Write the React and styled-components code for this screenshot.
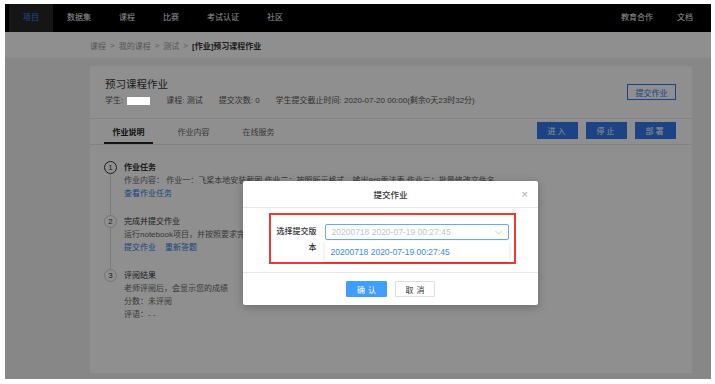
import React from "react";
import styled, { createGlobalStyle } from "styled-components";

const Global = createGlobalStyle`
  html, body { margin: 0; padding: 0; background: #fff; }
  body { font-family: "Liberation Sans", "Noto Sans CJK SC", sans-serif; }
  * { box-sizing: border-box; }
`;

const Outer = styled.div`
  width: 715px;
  height: 384px;
  padding: 4px 4px 5px 5px;
  background: #fff;
`;

const Frame = styled.div`
  position: relative;
  width: 706px;
  height: 375px;
  overflow: hidden;
  background: #f0f0f0;
  display: flex;
  flex-direction: column;
`;

const TopNav = styled.div`
  height: 28px;
  background: #000;
  display: flex;
  align-items: stretch;
  padding: 0 6px 0 4px;
  flex-shrink: 0;
`;

const NavItem = styled.div`
  padding: 0 ${(p) => (p.$right ? 12 : 14)}px;
  font-size: 8px;
  line-height: 28px;
  color: ${(p) => (p.$active ? "#3a86ee" : "#fff")};
  background: ${(p) => (p.$active ? "#272727" : "transparent")};
  white-space: nowrap;
`;

const NavSpacer = styled.div`
  flex: 1;
`;

const Crumbs = styled.div`
  height: 26px;
  background: #fff;
  display: flex;
  align-items: center;
  padding-left: 85px;
  font-size: 8px;
  color: #999;
  gap: 4px;
  flex-shrink: 0;
`;

const CrumbCurrent = styled.span`
  color: #333;
  font-weight: bold;
`;

const Main = styled.div`
  flex: 1;
  padding: 8px 19px 6px 85px;
  display: flex;
`;

const Card = styled.div`
  flex: 1;
  background: #fff;
  display: flex;
  flex-direction: column;
`;

const CardHeader = styled.div`
  height: 53px;
  padding: 0 16px 0 15px;
  display: flex;
  align-items: center;
  justify-content: space-between;
  border-bottom: 1px solid #eaeaea;
`;

const HeadText = styled.div`
  display: flex;
  flex-direction: column;
  gap: 4px;
`;

const Title = styled.div`
  font-size: 10.5px;
  line-height: 14px;
  color: #333;
`;

const Meta = styled.div`
  display: flex;
  gap: 16px;
  font-size: 8px;
  line-height: 12px;
  color: #555;
`;

const MetaItem = styled.span`
  display: flex;
  align-items: center;
  gap: 4px;
  white-space: nowrap;
`;

const Redacted = styled.span`
  position: relative;
  z-index: 30;
  display: inline-block;
  width: 23px;
  height: 8px;
  background: #fff;
`;

const OutlineButton = styled.button`
  width: 49px;
  height: 16px;
  padding: 0;
  border: 1px solid #3476ec;
  background: #fff;
  color: #3476ec;
  font-family: inherit;
  font-size: 8px;
`;

const TabsRow = styled.div`
  height: 26px;
  padding: 0 16px 0 14px;
  display: flex;
  align-items: stretch;
  justify-content: space-between;
  border-bottom: 1px solid #eaeaea;
`;

const Tabs = styled.div`
  display: flex;
  gap: 16px;
`;

const Tab = styled.div`
  width: 49px;
  display: flex;
  align-items: center;
  justify-content: center;
  font-size: 8px;
  color: ${(p) => (p.$active ? "#222" : "#666")};
  font-weight: ${(p) => (p.$active ? "bold" : "normal")};
  border-bottom: 2px solid ${(p) => (p.$active ? "#222" : "transparent")};
  padding-top: 1px;
`;

const Actions = styled.div`
  display: flex;
  align-items: center;
  gap: 8px;
  padding-bottom: 2px;
`;

const SolidButton = styled.button`
  width: 41px;
  height: 17px;
  padding: 0;
  border: none;
  background: #3478f0;
  color: #fff;
  font-family: inherit;
  font-size: 8px;
  letter-spacing: 2px;
`;

const Steps = styled.div`
  padding: 16px 0 0 14px;
  display: flex;
  flex-direction: column;
`;

const Step = styled.div`
  display: flex;
  padding-bottom: ${(p) => (p.$last ? 0 : 15)}px;
`;

const Rail = styled.div`
  width: 20px;
  display: flex;
  flex-direction: column;
  align-items: flex-start;
  margin-bottom: ${(p) => (p.$last ? 0 : -15)}px;
`;

const Circle = styled.div`
  width: 13px;
  height: 13px;
  border-radius: 50%;
  border: 1px solid ${(p) => (p.$active ? "#333" : "#cfcfcf")};
  color: #333;
  font-size: 8px;
  display: flex;
  align-items: center;
  justify-content: center;
  flex-shrink: 0;
`;

const RailLine = styled.div`
  flex: 1;
  width: 1px;
  margin-left: 6px;
  background: #dcdcdc;
`;

const StepBody = styled.div`
  display: flex;
  flex-direction: column;
  font-size: 8px;
  line-height: 13px;
  color: #666;
  white-space: nowrap;
`;

const StepTitle = styled.div`
  color: #333;
  font-weight: ${(p) => (p.$active ? "bold" : "normal")};
`;

const Links = styled.div`
  display: flex;
  gap: 9px;
`;

const Link = styled.span`
  color: #3478e0;
`;

const Overlay = styled.div`
  position: absolute;
  inset: 0;
  background: rgba(0, 0, 0, 0.44);
  z-index: 10;
`;

const Modal = styled.div`
  position: absolute;
  left: 238px;
  top: 177px;
  width: 295px;
  background: #fff;
  border-radius: 2px;
  box-shadow: 0 2px 10px rgba(0, 0, 0, 0.25);
  z-index: 20;
  display: flex;
  flex-direction: column;
`;

const ModalHeader = styled.div`
  height: 27px;
  border-bottom: 1px solid #e9e9e9;
  display: grid;
  grid-template-columns: 1fr auto 1fr;
  align-items: center;
`;

const ModalTitle = styled.div`
  font-size: 8.5px;
  color: #333;
  font-weight: 500;
`;

const Close = styled.div`
  justify-self: end;
  padding-right: 10px;
  font-size: 11px;
  color: #aaa;
  line-height: 1;
`;

const ModalBody = styled.div`
  padding: 5px 22px 8px 26px;
`;

const Annot = styled.div`
  height: 51px;
  border: 2px solid #f03a30;
  padding: 9px 5.5px 0 4.5px;
  display: flex;
  gap: 8px;
`;

const FieldLabel = styled.div`
  width: 41px;
  font-size: 8px;
  line-height: 16px;
  color: #333;
  font-weight: 500;
  text-align: right;
`;

const SelectWrap = styled.div`
  position: relative;
  width: 184px;
`;

const SelectBox = styled.div`
  height: 16px;
  border: 1px solid #6aa8f5;
  border-radius: 2px;
  padding: 0 6px;
  display: flex;
  align-items: center;
  justify-content: space-between;
  font-size: 8.5px;
  color: #c0c4cc;
  white-space: nowrap;
`;

const Dropdown = styled.div`
  position: absolute;
  left: 0;
  right: 0;
  top: 17px;
  height: 20px;
  background: #fff;
  box-shadow: 0 1px 4px rgba(0, 0, 0, 0.14);
  display: flex;
  align-items: center;
  padding: 2px 6px 0;
  font-size: 8.5px;
  color: #3a8ee6;
  white-space: nowrap;
`;

const ModalFooter = styled.div`
  height: 33px;
  border-top: 1px solid #e9e9e9;
  display: flex;
  justify-content: center;
  align-items: flex-start;
  padding-top: 8px;
  gap: 8px;
`;

const ModalButton = styled.button`
  width: ${(p) => (p.$primary ? 41 : 40)}px;
  height: 16px;
  padding: 0;
  border: 1px solid ${(p) => (p.$primary ? "#409eff" : "#dcdfe6")};
  background: ${(p) => (p.$primary ? "#409eff" : "#fff")};
  color: ${(p) => (p.$primary ? "#fff" : "#333")};
  border-radius: 1px;
  font-family: inherit;
  font-size: 8px;
  letter-spacing: 3px;
  text-indent: 3px;
`;

const Chevron = () => (
  <svg width="7" height="5" viewBox="0 0 7 5">
    <polyline points="0.5,1 3.5,4 6.5,1" fill="none" stroke="#c0c4cc" strokeWidth="0.9" />
  </svg>
);

export default function App() {
  return (
    <>
      <Global />
      <Outer>
        <Frame>
          <TopNav>
            <NavItem $active>项目</NavItem>
            <NavItem>数据集</NavItem>
            <NavItem>课程</NavItem>
            <NavItem>比赛</NavItem>
            <NavItem>考试认证</NavItem>
            <NavItem>社区</NavItem>
            <NavSpacer />
            <NavItem $right>教育合作</NavItem>
            <NavItem $right>文档</NavItem>
          </TopNav>
          <Crumbs>
            <span>课程</span>
            <span>&gt;</span>
            <span>我的课程</span>
            <span>&gt;</span>
            <span>测试</span>
            <span>&gt;</span>
            <CrumbCurrent>[作业]预习课程作业</CrumbCurrent>
          </Crumbs>
          <Main>
            <Card>
              <CardHeader>
                <HeadText>
                  <Title>预习课程作业</Title>
                  <Meta>
                    <MetaItem>
                      学生:<Redacted />
                    </MetaItem>
                    <MetaItem>课程: 测试</MetaItem>
                    <MetaItem>提交次数: 0</MetaItem>
                    <MetaItem>学生提交截止时间: 2020-07-20 00:00(剩余0天23时32分)</MetaItem>
                  </Meta>
                </HeadText>
                <OutlineButton>提交作业</OutlineButton>
              </CardHeader>
              <TabsRow>
                <Tabs>
                  <Tab $active>作业说明</Tab>
                  <Tab>作业内容</Tab>
                  <Tab>在线服务</Tab>
                </Tabs>
                <Actions>
                  <SolidButton>进入</SolidButton>
                  <SolidButton>停止</SolidButton>
                  <SolidButton>部署</SolidButton>
                </Actions>
              </TabsRow>
              <Steps>
                <Step>
                  <Rail>
                    <Circle $active>1</Circle>
                    <RailLine />
                  </Rail>
                  <StepBody>
                    <StepTitle $active>作业任务</StepTitle>
                    <div>作业内容： 作业一：飞桨本地安装截图 作业二：按照所示格式，输出9*9乘法表 作业三：批量修改文件名</div>
                    <Links>
                      <Link>查看作业任务</Link>
                    </Links>
                  </StepBody>
                </Step>
                <Step>
                  <Rail>
                    <Circle>2</Circle>
                    <RailLine />
                  </Rail>
                  <StepBody>
                    <StepTitle>完成并提交作业</StepTitle>
                    <div>运行notebook项目，并按照要求完成作业后提交</div>
                    <Links>
                      <Link>提交作业</Link>
                      <Link>重新答题</Link>
                    </Links>
                  </StepBody>
                </Step>
                <Step $last>
                  <Rail $last>
                    <Circle>3</Circle>
                  </Rail>
                  <StepBody>
                    <StepTitle>评阅结果</StepTitle>
                    <div>老师评阅后，会显示您的成绩</div>
                    <div>分数：未评阅</div>
                    <div>评语：- -</div>
                  </StepBody>
                </Step>
              </Steps>
            </Card>
          </Main>
          <Overlay />
          <Modal>
            <ModalHeader>
              <span />
              <ModalTitle>提交作业</ModalTitle>
              <Close>×</Close>
            </ModalHeader>
            <ModalBody>
              <Annot>
                <FieldLabel>选择提交版本</FieldLabel>
                <SelectWrap>
                  <SelectBox>
                    <span>20200718 2020-07-19 00:27:45</span>
                    <Chevron />
                  </SelectBox>
                  <Dropdown>20200718 2020-07-19 00:27:45</Dropdown>
                </SelectWrap>
              </Annot>
            </ModalBody>
            <ModalFooter>
              <ModalButton $primary>确认</ModalButton>
              <ModalButton>取消</ModalButton>
            </ModalFooter>
          </Modal>
        </Frame>
      </Outer>
    </>
  );
}
